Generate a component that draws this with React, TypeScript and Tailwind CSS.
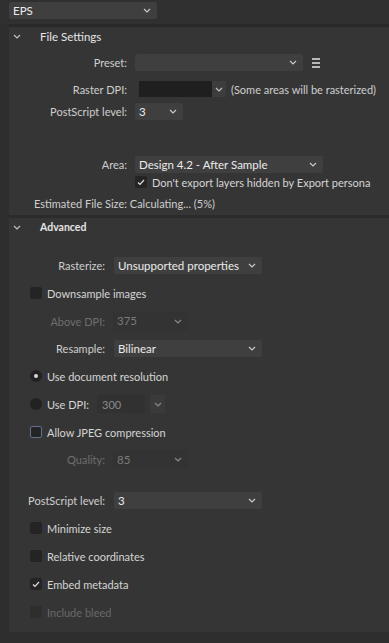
import React from 'react';

const FONT = "font-['Lato','Noto_Sans',sans-serif]";

function Chevron({ className = '' }: { className?: string }) {
  return (
    <svg width="8" height="5" viewBox="0 0 8 5" className={className}>
      <path d="M1 1 L4 4 L7 1" fill="none" stroke="currentColor" strokeWidth="1.2" />
    </svg>
  );
}

function Dropdown({
  value,
  width,
  disabled = false,
  height = 'h-[17px]',
}: {
  value: string;
  width: string;
  disabled?: boolean;
  height?: string;
}) {
  return (
    <div
      className={`${width} ${height} rounded-[2px] flex items-center justify-between pl-[4px] pr-[6px] text-[11.5px] ${
        disabled ? 'bg-[#333333] text-[#7a7a7a]' : 'bg-[#3f3f3f] text-[#ececec]'
      }`}
    >
      <span className="whitespace-nowrap">{value}</span>
      <Chevron className={disabled ? 'text-[#8a8a8a]' : 'text-[#c8c8c8]'} />
    </div>
  );
}

function Checkbox({ checked = false, disabled = false, focus = false }: { checked?: boolean; disabled?: boolean; focus?: boolean }) {
  return (
    <div
      className={`w-[12px] h-[12px] shrink-0 rounded-[2px] flex items-center justify-center ${
        disabled ? 'bg-[#2e2e2e]' : 'bg-[#242424]'
      } ${focus ? 'border border-[#5f7290]' : ''}`}
    >
      {checked && (
        <svg width="8" height="7" viewBox="0 0 8 7">
          <path d="M1 3.5 L3 5.5 L7 1" fill="none" stroke="#e0e0e0" strokeWidth="1.2" />
        </svg>
      )}
    </div>
  );
}

function Radio({ checked = false }: { checked?: boolean }) {
  return (
    <div className="w-[12px] h-[12px] shrink-0 rounded-full bg-[#222222] flex items-center justify-center">
      {checked && <div className="w-[4px] h-[4px] rounded-full bg-[#d8d8d8]" />}
    </div>
  );
}

function SectionHeader({ title, bold = false }: { title: string; bold?: boolean }) {
  return (
    <div className="h-[19px] flex items-center text-[#e6e6e6]">
      <div className="w-[31px] pl-[4px]">
        <Chevron className="text-[#c0c0c0]" />
      </div>
      <span className={bold ? 'font-bold text-[10.5px]' : 'text-[11.5px]'}>{title}</span>
    </div>
  );
}

function CheckRow({ label, checked, disabled, focus }: { label: string; checked?: boolean; disabled?: boolean; focus?: boolean }) {
  return (
    <div className="flex items-center gap-[5px] pl-[21px] h-[12px]">
      <Checkbox checked={checked} disabled={disabled} focus={focus} />
      <span className={`whitespace-nowrap ${disabled ? 'text-[#6a6a6a]' : 'text-[#d6d6d6]'}`}>{label}</span>
    </div>
  );
}

export default function App() {
  return (
    <div className={`w-[389px] h-[643px] bg-[#2e2e2e] text-[11px] leading-none overflow-hidden ${FONT}`}>
      {/* format picker */}
      <div className="h-[24px] bg-[#303030] pl-[9px] pt-[2px]">
        <Dropdown value="EPS" width="w-[148px]" />
      </div>

      <div className="ml-[9px] border-t-[3px] border-[#282828] bg-[#353535]">
        {/* File Settings */}
        <SectionHeader title="File Settings" />
        <div className="pt-[8px] text-[#cfcfcf] whitespace-nowrap">
          <div className="flex items-center h-[17px]">
            <span className="w-[118px] text-right">Preset:</span>
            <div className="ml-[8px]">
              <Dropdown value="" width="w-[168px]" />
            </div>
            <div className="ml-[9px] flex flex-col gap-[2px]">
              <div className="w-[8px] h-[2px] bg-[#b8b8b8]" />
              <div className="w-[8px] h-[2px] bg-[#b8b8b8]" />
              <div className="w-[8px] h-[2px] bg-[#b8b8b8]" />
            </div>
          </div>
          <div className="flex items-center h-[16px] mt-[10px]">
            <span className="w-[118px] text-right">Raster DPI:</span>
            <div className="ml-[12px] w-[73px] h-[16px] bg-[#1f1f1f]" />
            <div className="w-[14px] h-[16px] bg-[#3d3d3d] flex items-center justify-center">
              <Chevron className="text-[#c0c0c0]" />
            </div>
            <span className="ml-[5px]">(Some areas will be rasterized)</span>
          </div>
          <div className="flex items-center h-[17px] mt-[6px]">
            <span className="w-[118px] text-right">PostScript level:</span>
            <div className="ml-[8px]">
              <Dropdown value="3" width="w-[48px]" />
            </div>
          </div>
          <div className="flex items-center h-[17px] mt-[36px]">
            <span className="w-[118px] text-right">Area:</span>
            <div className="ml-[8px]">
              <Dropdown value="Design 4.2 - After Sample" width="w-[188px]" />
            </div>
          </div>
          <div className="flex items-center gap-[5px] pl-[126px] h-[12px] mt-[3px]">
            <Checkbox checked />
            <span className="text-[#d6d6d6]">Don't export layers hidden by Export persona</span>
          </div>
          <div className="pl-[25px] mt-[10px] pb-[6px]">Estimated File Size: Calculating... (5%)</div>
        </div>

        {/* Advanced */}
        <div className="border-t-[3px] border-[#2b2b2b]">
          <SectionHeader title="Advanced" bold />
          <div className="pt-[20px] pb-[14px] text-[#cfcfcf] whitespace-nowrap">
            <div className="flex items-center h-[17px]">
              <span className="w-[96px] text-right">Rasterize:</span>
              <div className="ml-[9px]">
                <Dropdown value="Unsupported properties" width="w-[148px]" />
              </div>
            </div>
            <div className="mt-[13px]">
              <CheckRow label="Downsample images" />
            </div>
            <div className="flex items-center h-[20px] mt-[12px]">
              <span className="w-[96px] text-right text-[#6e6e6e]">Above DPI:</span>
              <div className="ml-[8px]">
                <Dropdown value="375" width="w-[75px]" height="h-[20px]" disabled />
              </div>
            </div>
            <div className="flex items-center h-[17px] mt-[9px]">
              <span className="w-[96px] text-right">Resample:</span>
              <div className="ml-[9px]">
                <Dropdown value="Bilinear" width="w-[148px]" />
              </div>
            </div>
            <div className="flex items-center gap-[5px] pl-[21px] h-[12px] mt-[13px]">
              <Radio checked />
              <span className="text-[#d6d6d6]">Use document resolution</span>
            </div>
            <div className="flex items-center gap-[5px] pl-[21px] h-[18px] mt-[13px]">
              <Radio />
              <span className="text-[#d6d6d6]">Use DPI:</span>
              <div className="ml-[3px] w-[48px] h-[18px] bg-[#313131] flex items-center pl-[5px] text-[#8a8a8a]">300</div>
              <div className="w-[15px] h-[18px] bg-[#3a3a3a] flex items-center justify-center">
                <Chevron className="text-[#8a8a8a]" />
              </div>
            </div>
            <div className="mt-[13px]">
              <CheckRow label="Allow JPEG compression" focus />
            </div>
            <div className="flex items-center h-[19px] mt-[12px]">
              <span className="w-[96px] text-right text-[#6e6e6e]">Quality:</span>
              <div className="ml-[8px]">
                <Dropdown value="85" width="w-[75px]" height="h-[19px]" disabled />
              </div>
            </div>
            <div className="flex items-center h-[17px] mt-[23px]">
              <span className="w-[96px] text-right">PostScript level:</span>
              <div className="ml-[9px]">
                <Dropdown value="3" width="w-[148px]" />
              </div>
            </div>
            <div className="mt-[13px]">
              <CheckRow label="Minimize size" />
            </div>
            <div className="mt-[16px]">
              <CheckRow label="Relative coordinates" />
            </div>
            <div className="mt-[16px]">
              <CheckRow label="Embed metadata" checked />
            </div>
            <div className="mt-[16px]">
              <CheckRow label="Include bleed" disabled />
            </div>
          </div>
        </div>
      </div>
    </div>
  );
}
